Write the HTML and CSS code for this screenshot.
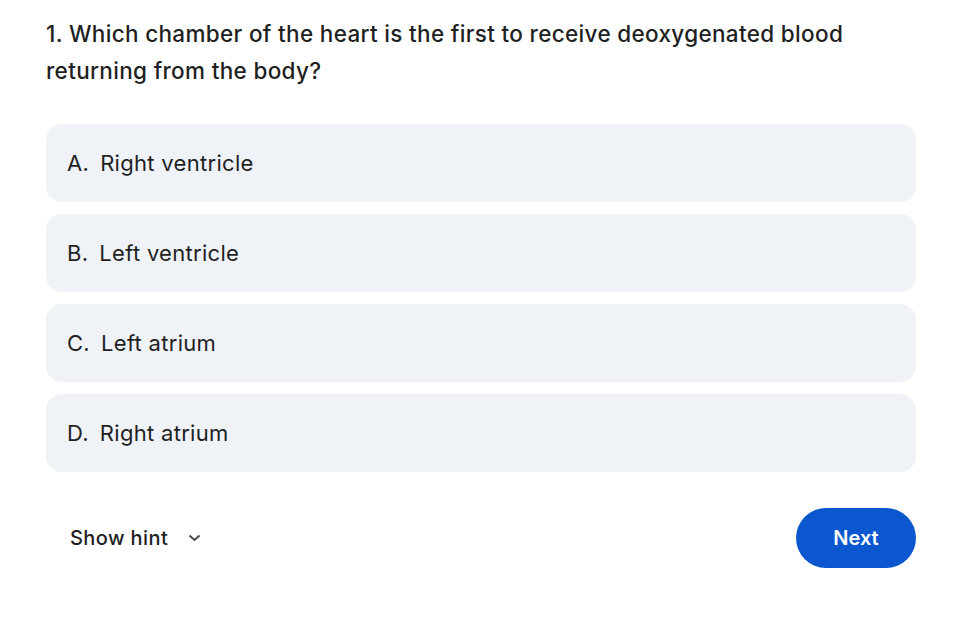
FILE: index.html
```html
<!DOCTYPE html>
<html>
<head>
<meta charset="utf-8">
<link rel="stylesheet" href="styles.css">
</head>
<body>
<div class="quiz">
  <h1 class="question">1. Which chamber of the heart is the first to receive deoxygenated blood returning from the body?</h1>
  <div class="options">
    <div class="option"><span class="letter">A.</span><span>Right ventricle</span></div>
    <div class="option"><span class="letter">B.</span><span>Left ventricle</span></div>
    <div class="option"><span class="letter">C.</span><span>Left atrium</span></div>
    <div class="option"><span class="letter">D.</span><span>Right atrium</span></div>
  </div>
  <div class="footer">
    <button class="hint">Show hint
      <svg class="chev" width="13" height="8" viewBox="0 0 13 8"><path d="M1.5 1.5 L6.5 6 L11.5 1.5" fill="none" stroke="#444746" stroke-width="1.8"/></svg>
    </button>
    <button class="next">Next</button>
  </div>
</div>
</body>
</html>
```
FILE: styles.css
```css
html, body {
  margin: 0;
  padding: 0;
  background: #ffffff;
}
body {
  font-family: Inter, Roboto, "Liberation Sans", sans-serif;
  color: #1f1f1f;
}
.quiz {
  padding: 15px 62px 0 46px;
}
.question {
  margin: 0;
  font-size: 22.5px;
  font-weight: 500;
  line-height: 37px;
  color: #1f1f1f;
  max-width: 830px;
  letter-spacing: 0.33px;
}
.options {
  margin-top: 35px;
  display: flex;
  flex-direction: column;
  gap: 12px;
}
.option {
  height: 78px;
  box-sizing: border-box;
  background: #eff2f7;
  border-radius: 16px;
  display: flex;
  align-items: center;
  padding-left: 21px;
  font-size: 22px;
  color: #1f1f1f;
  letter-spacing: 0.3px;
}
.letter {
  margin-right: 11px;
}
.footer {
  margin-top: 36px;
  display: flex;
  justify-content: space-between;
  align-items: center;
}
.hint {
  border: none;
  background: none;
  font-family: inherit;
  font-size: 20px;
  font-weight: 500;
  color: #1f1f1f;
  display: flex;
  align-items: center;
  padding: 0 0 0 24px;
  cursor: pointer;
  letter-spacing: 0.4px;
}
.chev {
  margin-left: 20px;
}
.next {
  width: 120px;
  height: 60px;
  border: none;
  border-radius: 30px;
  background: #0b57d0;
  color: #ffffff;
  font-family: inherit;
  font-size: 20px;
  font-weight: 600;
  cursor: pointer;
}
```
